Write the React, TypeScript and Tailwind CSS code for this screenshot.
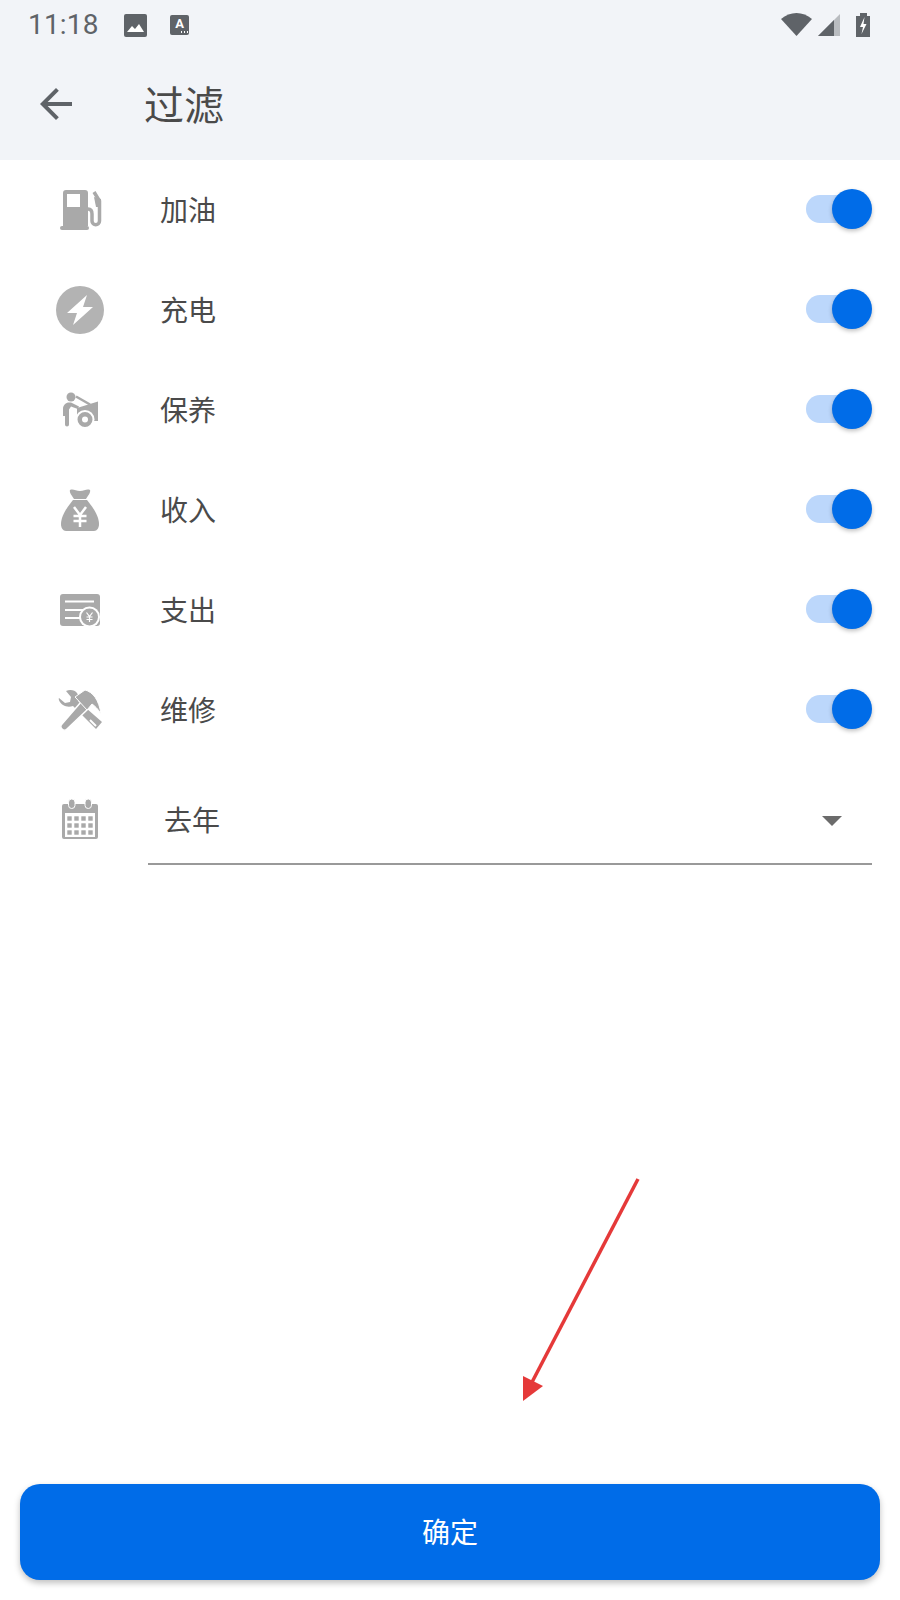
import { ReactNode } from 'react';

const GRAY = '#a9a9a9';

function GasIcon() {
  return (
    <svg width="48" height="48" viewBox="0 0 48 48" fill={GRAY}>
      <path d="M7 7a3 3 0 0 1 3-3h19a3 3 0 0 1 3 3v33H7zM11 8v13h13V8z" fillRule="evenodd" />
      <rect x="4" y="40" width="29" height="4" rx="2" />
      <path d="M32 23c3 0 4 2 4 5v7c0 5 7.500 5 7.500 0V15L38 6" fill="none" stroke={GRAY} strokeWidth="3.500" />
      <path d="M38 11l7 2v8h-5z" />
    </svg>
  );
}

function BoltIcon() {
  return (
    <svg width="48" height="48" viewBox="0 0 48 48">
      <circle cx="24" cy="24" r="24" fill="#b3b3b3" />
      <path d="M31 9 11 27h10l-4 12 20-18H27z" fill="#fff" />
    </svg>
  );
}

function ServiceIcon() {
  return (
    <svg width="48" height="48" viewBox="0 0 48 48" fill={GRAY}>
      <circle cx="15" cy="11" r="4.500" />
      <path d="M7 23c0-4 3-6.500 6-6.500h2l8 4-1.200 2.600-6.800-2.600-2 3v15a2 2 0 0 1-4 0V30l-2 0z" />
      <path d="M20 10.500 34 18.500" fill="none" stroke={GRAY} strokeWidth="2.500" />
      <path d="M21 22l21-6.500V35H21z" />
      <circle cx="29" cy="33.500" r="9.500" fill="#fff" />
      <path d="M29 26a7.500 7.500 0 1 0 0 15 7.500 7.500 0 0 0 0-15zm0 4.500a3 3 0 1 1 0 6 3 3 0 0 1 0-6z" fillRule="evenodd" />
    </svg>
  );
}

function BagIcon() {
  return (
    <svg width="48" height="48" viewBox="0 0 48 48" fill={GRAY}>
      <path d="M14 4c3-1.500 6 1 10 1s7-2.500 10-1c1 2-2 6-4 9H18c-2-3-5-7-4-9z" />
      <path d="M17 14h14c4 5 12 15 12 24 0 4-2 7-5 7H10c-3 0-5-3-5-7 0-9 8-19 12-24z" />
      <path d="m18 21 6 8 6-8M24 29v12M17.500 30h13M17.500 35h13" fill="none" stroke="#fff" strokeWidth="2.500" />
    </svg>
  );
}

function BillIcon() {
  return (
    <svg width="48" height="48" viewBox="0 0 48 48">
      <rect x="4" y="8" width="40" height="32" rx="3" fill={GRAY} />
      <path d="M9 15.500h29M9 24h21M9 32h15" stroke="#fff" strokeWidth="2" />
      <circle cx="33.500" cy="31" r="10.500" fill="#fff" />
      <circle cx="33.500" cy="31" r="8.500" fill={GRAY} />
      <path d="m30.500 26.500 3 4 3-4M33.500 30.500V36M30.500 31h6M30.500 33.500h6" fill="none" stroke="#fff" strokeWidth="1.200" />
    </svg>
  );
}

function ToolsIcon() {
  return (
    <svg width="48" height="48" viewBox="0 0 48 48" fill={GRAY}>
      <path d="M3 12l6 5 5-1 1-5-5-6c4-2 9-1 11 2s2 6 1 8l24 21-6 7-23-23c-3 1-7 1-10-1s-5-6-4-7z" />
      <path d="M34 34l6 6" stroke="#fff" strokeWidth="2" />
      <path d="M25 16 6 38a3.500 3.500 0 0 0 5 5l21-20z" stroke="#fff" strokeWidth="1.500" />
      <path d="M19 11 29 4c8 2 14 10 16 24-3-5-6-8-9-10l-5 6-11-12z" stroke="#fff" strokeWidth="1" />
    </svg>
  );
}

function CalendarIcon() {
  const xs = [13.500, 20.500, 27.500, 34.500];
  const ys = [22.500, 29.500, 36.500];
  return (
    <svg width="48" height="48" viewBox="0 0 48 48" fill={GRAY}>
      <path d="M8 8h32a2 2 0 0 1 2 2v31a2 2 0 0 1-2 2H8a2 2 0 0 1-2-2V10a2 2 0 0 1 2-2zm1 9v24h30V17z" fillRule="evenodd" />
      <rect x="12.500" y="3" width="6.500" height="9.500" rx="3.200" stroke="#fff" strokeWidth="1" />
      <rect x="29" y="3" width="6.500" height="9.500" rx="3.200" stroke="#fff" strokeWidth="1" />
      {ys.map((y) => xs.map((x) => <rect key={`${x}-${y}`} x={x - 2.2} y={y - 2.2} width="4.400" height="4.400" />))}
    </svg>
  );
}

function Toggle() {
  return (
    <div className="relative ml-auto mr-[28px] mb-[2px] flex h-[40px] w-[66px] items-center">
      <div className="h-[28px] w-[56px] rounded-full bg-[#bcd7fb]" />
      <div className="absolute right-0 top-0 h-[40px] w-[40px] rounded-full bg-[#006ce8] shadow-[0_2px_4px_rgba(0,0,0,0.25)]" />
    </div>
  );
}

function Row({ icon, label }: { icon: ReactNode; label: string }) {
  return (
    <div className="flex h-[100px] items-center">
      <div className="ml-[56px] mr-[56px] h-[48px] w-[48px]">{icon}</div>
      <span className="pt-[4px] text-[28px] leading-none text-[#4a4a4a]">{label}</span>
      <Toggle />
    </div>
  );
}

const rows = [
  { label: '加油', icon: <GasIcon /> },
  { label: '充电', icon: <BoltIcon /> },
  { label: '保养', icon: <ServiceIcon /> },
  { label: '收入', icon: <BagIcon /> },
  { label: '支出', icon: <BillIcon /> },
  { label: '维修', icon: <ToolsIcon /> },
];

export default function App() {
  return (
    <div className="relative flex h-[1600px] w-[900px] flex-col bg-white font-['Roboto','Noto_Sans_CJK_SC',sans-serif]">
      <div className="h-[160px] bg-[#f2f4f8]">
        <div className="flex h-[50px] items-center pl-[28px] pr-[29px] text-[#5f6368]">
          <span className="w-[71px] text-[28px] leading-none tracking-[0.2px]">11:18</span>
          <svg className="ml-[25px]" width="23" height="23" viewBox="0 0 23 23">
            <rect width="23" height="23" rx="2" fill="#5f6368" />
            <path d="m3 18 5-6 3 3 4-5 5 8z" fill="#fff" />
          </svg>
          <div className="relative ml-[23px] flex h-[20px] w-[19px] items-start justify-center rounded-[2px] bg-[#5f6368] text-[13px] font-bold leading-[17px] text-white">
            A
            <span className="absolute bottom-[2px] right-[1px] h-[2px] w-[8px] bg-[radial-gradient(circle,#fff_1px,transparent_1px)] bg-[length:3px_2px]" />
          </div>
          <svg className="ml-auto" width="90" height="28" viewBox="0 0 90 28" fill="#5f6368">
            <path d="M0 8c9-8 22-8 31 0L15.500 25z" />
            <path d="M37 25 59 3v22z" fill="#b9bcc0" />
            <path d="M37 25 53 9v16z" />
            <path d="M79 2h7v3h3v21H75V5h4z" />
            <path d="m83.500 6-4.500 10h3l-1.500 7 5-10h-3z" fill="#fff" />
          </svg>
        </div>
        <div className="flex h-[108px] items-center pl-[32px]">
          <svg width="48" height="48" viewBox="0 0 24 24" fill="#5f6368">
            <path d="M20 11H7.830l5.590-5.590L12 4l-8 8 8 8 1.410-1.410L7.830 13H20v-2z" />
          </svg>
          <span className="ml-[64px] pt-[6px] text-[40px] leading-none text-[#4a4a4a]">过滤</span>
        </div>
      </div>

      <div className="flex flex-col">
        {rows.map((r) => (
          <Row key={r.label} icon={r.icon} label={r.label} />
        ))}
        <div className="flex h-[105px]">
          <div className="ml-[56px] mt-[36px] h-[48px] w-[48px]">
            <CalendarIcon />
          </div>
          <div className="ml-[44px] mr-[28px] flex flex-1 items-center border-b-2 border-[#999] pl-[16px] pr-[30px] pt-[14px]">
            <span className="pt-[7px] text-[28px] leading-none text-[#4a4a4a]">去年</span>
            <div className="ml-auto mt-[4px] h-0 w-0 border-x-[10px] border-t-[10px] border-x-transparent border-t-[#6b6b6b]" />
          </div>
        </div>
      </div>

      <button className="mx-[20px] mb-[20px] mt-auto h-[96px] rounded-[20px] bg-[#006ce8] pt-[4px] text-[28px] text-white shadow-[0_3px_6px_rgba(0,0,0,0.25)]">
        确定
      </button>

      {/* red annotation arrow on top of the page */}
      <svg className="absolute left-[510px] top-[1170px]" width="140" height="240" viewBox="510 1170 140 240">
        <path d="M638 1179 530 1386" stroke="#e53939" strokeWidth="3.500" />
        <path d="m523 1376 20 10-20 15z" fill="#e53939" />
      </svg>
    </div>
  );
}
